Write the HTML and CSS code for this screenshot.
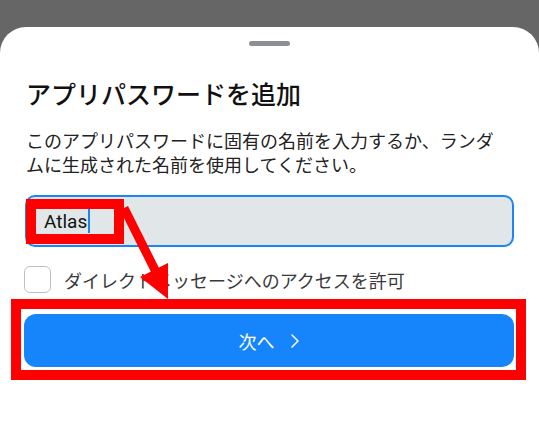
FILE: index.html
```html
<!DOCTYPE html>
<html lang="ja">
<head>
  <meta charset="UTF-8">
  <meta name="viewport" content="width=device-width, initial-scale=1.0">
  <title>アプリパスワードを追加</title>
  <link rel="stylesheet" href="styles.css">
</head>
<body>

  <div class="screen">
    <div class="sheet">
      <div class="handle"></div>
      <h1 class="title">アプリパスワードを追加</h1>
      <p class="lead">このアプリパスワードに固有の名前を入力するか、ランダムに生成された名前を使用してください。</p>

      <div class="field">
        <span class="value">Atlas</span><span class="caret"></span>
      </div>

      <label class="check">
        <span class="box"></span>
        <span>ダイレクトメッセージへのアクセスを許可</span>
      </label>

      <button class="next">
        <span>次へ</span>
        <svg width="10" height="16" viewBox="0 0 10 16">
          <path d="M2 2 L8 8 L2 14" fill="none" stroke="#fff" stroke-width="1.5" stroke-linecap="round" stroke-linejoin="round"/>
        </svg>
      </button>
    </div>

    <!-- 注釈（赤枠と矢印） -->
    <div class="mark mark-input"></div>
    <div class="mark mark-button"></div>
    <svg class="arrow" width="539" height="424" viewBox="0 0 539 424">
      <line x1="124" y1="208" x2="156" y2="272" stroke="#ff0000" stroke-width="9"/>
      <polygon points="168,299 168,263 140,277" fill="#ff0000"/>
    </svg>
  </div>

</body>
</html>
```

FILE: styles.css
```css
body {
  margin: 0;
  font-family: "Noto Sans CJK JP", "Noto Sans", sans-serif;
  background: #666666;
}

.screen {
  position: relative;
  width: 539px;
  height: 424px;
  overflow: hidden;
  padding-top: 27px;
  box-sizing: border-box;
}

.sheet {
  background: #fff;
  border-radius: 26px 26px 0 0;
  height: 397px;
  padding: 0 25px;
  display: flex;
  flex-direction: column;
}

.handle {
  width: 41px;
  height: 5px;
  border-radius: 3px;
  background: #8c9095;
  margin: 14px auto 0;
}

.title {
  font-size: 25px;
  line-height: 34px;
  font-weight: 500;
  color: #111;
  margin: 30px 0 0 1px;
}

.lead {
  font-size: 18px;
  line-height: 24px;
  color: #222;
  margin: 18px 0 0 1px;
  padding-right: 10px;
}

.field {
  margin-top: 19px;
  height: 52px;
  box-sizing: border-box;
  border: 2px solid #1a85f6;
  border-radius: 10px;
  background: #e1e6e9;
  display: flex;
  align-items: center;
  padding-left: 17px;
}

.value {
  font-family: Roboto, "Liberation Sans", sans-serif;
  font-size: 19px;
  color: #111;
}

.caret {
  width: 2px;
  height: 24px;
  background: #1a85f6;
  margin-left: 1px;
}

.check {
  margin-top: 19px;
  display: flex;
  align-items: center;
  gap: 13px;
  font-size: 18px;
  color: #3a3a3a;
  height: 27px;
  margin-left: -1px;
}

.box {
  width: 27px;
  height: 27px;
  box-sizing: border-box;
  border: 1.5px solid #b9c2cb;
  border-radius: 6px;
}

.next {
  margin-top: 21px;
  height: 53px;
  border: none;
  border-radius: 12px;
  background: #1685fb;
  color: #fff;
  font-family: inherit;
  font-size: 18px;
  display: flex;
  align-items: center;
  justify-content: center;
  gap: 15px;
  margin-left: -1px;
}

.mark {
  position: absolute;
  border: 10px solid #ff0000;
  box-sizing: border-box;
}

.mark-input {
  left: 26px;
  top: 199px;
  width: 98px;
  height: 45px;
}

.mark-button {
  left: 11px;
  top: 299px;
  width: 515px;
  height: 81px;
}

.arrow {
  position: absolute;
  left: 0;
  top: 0;
}
```
